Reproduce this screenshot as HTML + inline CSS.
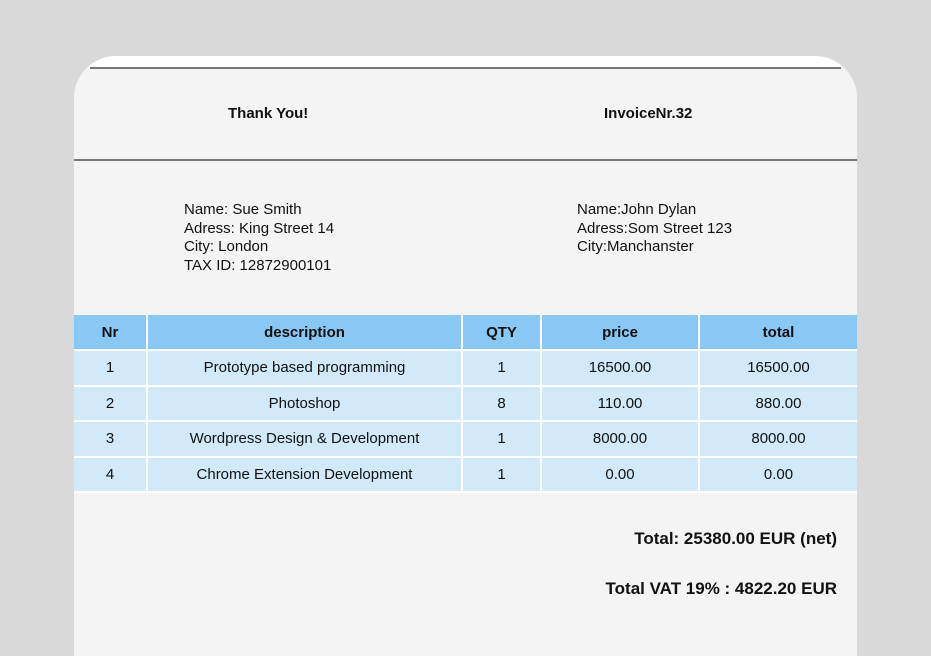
<!DOCTYPE html>
<html><head><style>
body{margin:0;background:#d9d9d9;width:931px;height:595px;overflow:hidden;font-family:"Liberation Sans",sans-serif;color:#111}
.card{position:absolute;left:74px;top:56px;width:783px;height:600px;background:#f4f4f4;border-radius:42px 42px 0 0;overflow:hidden}
.top{position:absolute;left:0;top:0;width:783px;height:11px;background:#fff}
.l1{position:absolute;left:16px;top:11px;width:751px;height:2px;background:#777}
.l2{position:absolute;left:0;top:103px;width:783px;height:2px;background:#777}
.h{position:absolute;top:49px;font-weight:bold;font-size:15px}
.addr{position:absolute;top:145px;font-size:15px;line-height:18.5px}
table{position:absolute;left:0;top:259px;width:783px;border-collapse:collapse;font-size:15px}
td,th{border:2px solid #fff;text-align:center;height:33.5px;padding:0}
th{background:#89c7f5;font-weight:bold;height:34px}
td{background:#d2e9f9}
tr>*:first-child{border-left:none}tr>*:last-child{border-right:none}
tr:first-child th{border-top:none}
.t{position:absolute;right:20px;font-weight:bold;font-size:17px}
</style></head><body>
<div class="card">
<div class="top"></div><div class="l1"></div><div class="l2"></div>
<div class="h" style="left:154px">Thank You!</div>
<div class="h" style="left:530px">InvoiceNr.32</div>
<div class="addr" style="left:110px">Name: Sue Smith<br>Adress: King Street 14<br>City: London<br>TAX ID: 12872900101</div>
<div class="addr" style="left:503px">Name:John Dylan<br>Adress:Som Street 123<br>City:Manchanster</div>
<table>
<colgroup><col style="width:73px"><col style="width:315px"><col style="width:79px"><col style="width:158px"><col style="width:158px"></colgroup>
<tr><th>Nr</th><th>description</th><th>QTY</th><th>price</th><th>total</th></tr>
<tr><td>1</td><td>Prototype based programming</td><td>1</td><td>16500.00</td><td>16500.00</td></tr>
<tr><td>2</td><td>Photoshop</td><td>8</td><td>110.00</td><td>880.00</td></tr>
<tr><td>3</td><td>Wordpress Design &amp; Development</td><td>1</td><td>8000.00</td><td>8000.00</td></tr>
<tr><td>4</td><td>Chrome Extension Development</td><td>1</td><td>0.00</td><td>0.00</td></tr>
</table>
<div class="t" style="top:473px">Total: 25380.00 EUR (net)</div>
<div class="t" style="top:523px">Total VAT 19% : 4822.20 EUR</div>
</div>
</body></html>
